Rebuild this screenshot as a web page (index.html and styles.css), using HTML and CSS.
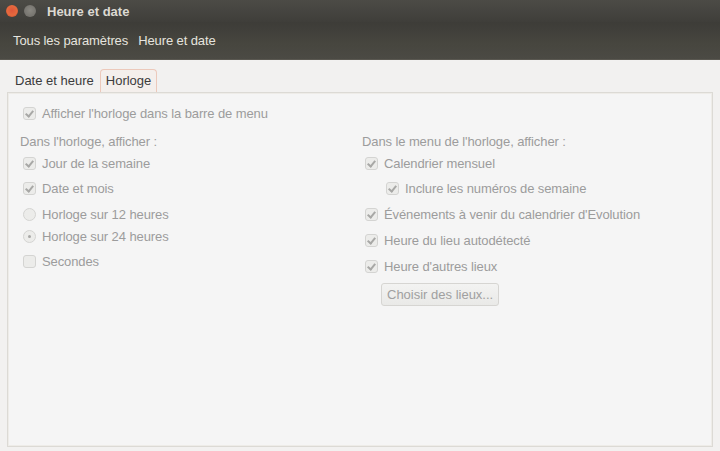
FILE: index.html
```html
<!DOCTYPE html>
<html lang="fr">

<head>
  <meta charset="UTF-8">
  <meta name="viewport" content="width=device-width, initial-scale=1.0">
  <title>Heure et date</title>
  <link rel="stylesheet" href="styles.css">
</head>

<body>
  <div class="window">
    <!-- barre de titre -->
    <div class="titlebar">
      <span class="wbtn close"></span>
      <span class="wbtn mini"></span>
      <span class="title">Heure et date</span>
    </div>

    <!-- barre de navigation -->
    <div class="toolbar">
      <span class="crumb">Tous les paramètres</span>
      <span class="crumb">Heure et date</span>
    </div>

    <div class="tabs">
      <span class="tab">Date et heure</span>
      <span class="tab active">Horloge</span>
    </div>

    <div class="notebook">
      <div class="row top">
        <span class="check on"></span>
        <span>Afficher l'horloge dans la barre de menu</span>
      </div>

      <div class="cols">
        <div class="col left">
          <div class="heading">Dans l'horloge, afficher :</div>
          <div class="row r1"><span class="check on"></span><span>Jour de la semaine</span></div>
          <div class="row r2"><span class="check on"></span><span>Date et mois</span></div>
          <div class="row r3"><span class="radio"></span><span>Horloge sur 12 heures</span></div>
          <div class="row r4"><span class="radio on"></span><span>Horloge sur 24 heures</span></div>
          <div class="row r2"><span class="check"></span><span>Secondes</span></div>
        </div>

        <div class="col right">
          <div class="heading">Dans le menu de l'horloge, afficher :</div>
          <div class="row r1"><span class="check on"></span><span>Calendrier mensuel</span></div>
          <div class="row r2 sub"><span class="check on"></span><span>Inclure les numéros de semaine</span></div>
          <div class="row r3"><span class="check on"></span><span>Événements à venir du calendrier d'Evolution</span></div>
          <div class="row r3"><span class="check on"></span><span>Heure du lieu autodétecté</span></div>
          <div class="row r3"><span class="check on"></span><span>Heure d'autres lieux</span></div>
          <button class="places">Choisir des lieux...</button>
        </div>
      </div>
    </div>
  </div>
</body>

</html>
```

FILE: styles.css
```css
body {
  margin: 0;
  padding: 0;
  font-family: "Liberation Sans", "DejaVu Sans", sans-serif;
  font-size: 13px;
  background-color: #f2f1f0;
}

.window {
  width: 720px;
  height: 451px;
  display: flex;
  flex-direction: column;
  overflow: hidden;
}

/* barre de titre */
.titlebar {
  height: 22px;
  display: flex;
  align-items: center;
  background: linear-gradient(#4c4b46, #3f3e3a);
}

.wbtn {
  width: 12px;
  height: 12px;
  border-radius: 50%;
  margin-left: 6px;
}

.wbtn.close {
  background: radial-gradient(circle at 50% 45%, #e0563a 0%, #e66a3e 55%, #b5442a 100%);
}

.wbtn.mini {
  background: radial-gradient(circle at 50% 45%, #8a8882, #6d6b66);
}

.title {
  margin-left: 11px;
  color: #dcd9d2;
  font-weight: bold;
  font-size: 13px;
}

.toolbar {
  height: 37px;
  display: flex;
  align-items: center;
  padding-left: 9px;
  gap: 2px;
  background: linear-gradient(#3d3c38, #47463f 60%, #4b4a44);
  border-bottom: 1px solid #5a5851;
}

.crumb {
  color: #e6e4df;
  padding: 3px 4px;
  letter-spacing: -0.1px;
}

/* onglets */
.tabs {
  display: flex;
  align-items: flex-end;
  height: 32px;
  padding-left: 9px;
}

.tab {
  color: #3c3c3c;
  padding: 3px 6px 4px;
}

.tab.active {
  border: 1px solid #ecc9bb;
  border-bottom: none;
  border-radius: 4px 4px 0 0;
  background-color: #f4efec;
  padding: 3px 5px 4px;
}

.notebook {
  flex: 1;
  margin: 0 7px 4px 7px;
  border: 1px solid #dcdad5;
  box-shadow: inset 0 0 0 1px #eeece8;
  background-color: #f5f5f5;
  padding: 10px 0 0 12px;
  color: #9c9c9c;
}

.row {
  display: flex;
  align-items: center;
  height: 20px;
  white-space: nowrap;
  letter-spacing: -0.1px;
}

.row.top {
  padding-left: 3px;
}

.cols {
  display: flex;
  margin-top: 9px;
}

.col.left {
  width: 342px;
}

.heading {
  height: 20px;
  line-height: 20px;
  margin-bottom: 1px;
  letter-spacing: -0.1px;
}

.col .row {
  padding-left: 3px;
}

.row.r2 {
  margin-top: 5px;
}

.row.r3 {
  margin-top: 6px;
}

.row.r4 {
  margin-top: 2px;
}

.row.sub {
  padding-left: 24px;
}

/* cases et boutons radio */
.check,
.radio {
  width: 11px;
  height: 11px;
  margin-right: 6px;
  border: 1px solid #d4d4d2;
  background-color: #ececea;
  border-radius: 3px;
  position: relative;
  flex-shrink: 0;
}

.radio {
  border-radius: 50%;
}

.check.on::after {
  content: "";
  position: absolute;
  left: 3px;
  top: 1px;
  width: 3px;
  height: 6px;
  border-right: 2px solid #a8a8a6;
  border-bottom: 2px solid #a8a8a6;
  transform: rotate(40deg);
}

.radio.on::after {
  content: "";
  position: absolute;
  left: 4px;
  top: 4px;
  width: 3px;
  height: 3px;
  border-radius: 50%;
  background-color: #a8a8a6;
}

.places {
  margin-top: 7px;
  margin-left: 19px;
  height: 23px;
  padding: 0 5px;
  font-family: inherit;
  font-size: 13px;
  color: #a0a0a0;
  background: linear-gradient(#f3f3f2, #e9e9e7);
  border: 1px solid #d6d5d2;
  border-radius: 3px;
}
```
